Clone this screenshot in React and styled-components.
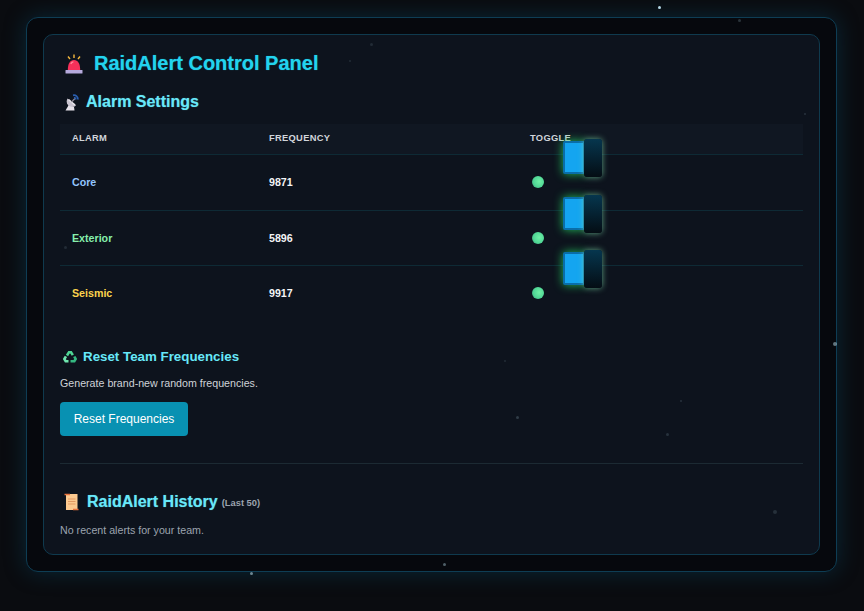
import React from "react";
import styled, { createGlobalStyle } from "styled-components";

const Global = createGlobalStyle`
  html, body { margin: 0; padding: 0; height: 100%; background: #0a0c10; }
  body { font-family: "Liberation Sans", Arial, sans-serif; overflow: hidden; }
  #root { height: 100%; }
`;

const Page = styled.div`
  position: relative;
  width: 864px;
  height: 611px;
  box-sizing: border-box;
  padding: 17px 27px 39px 26px;
  overflow: hidden;
  background: #0a0c10;
`;

const Star = styled.span`
  position: absolute;
  z-index: 3;
  left: ${(p) => p.$x}px;
  top: ${(p) => p.$y}px;
  width: ${(p) => p.$s}px;
  height: ${(p) => p.$s}px;
  border-radius: 50%;
  background: rgba(190, 225, 240, ${(p) => p.$a});
`;

const Outer = styled.div`
  position: relative;
  z-index: 1;
  height: 100%;
  box-sizing: border-box;
  padding: 16px;
  background: #06080d;
  border: 1.5px solid #0e3d54;
  border-radius: 12px;
  box-shadow: 0 0 22px rgba(10, 90, 125, 0.36);
`;

const Panel = styled.main`
  height: 100%;
  box-sizing: border-box;
  padding: 17px 16px 0;
  background: #0d131d;
  border: 1px solid #0f3a4e;
  border-radius: 10px;
`;

const Title = styled.h1`
  display: flex;
  align-items: center;
  gap: 11px;
  margin: 0 0 18px 5px;
  height: 23px;
  font-size: 20px;
  line-height: 23px;
  font-weight: 700;
  color: #22d3ee;
  text-shadow: 0 0 1px rgba(34, 211, 238, 0.55);
`;

const SectionTitle = styled.h2`
  display: flex;
  align-items: center;
  gap: 7px;
  margin: 0 0 13px 5px;
  height: 18px;
  font-size: 16px;
  line-height: 18px;
  font-weight: 700;
  color: #67e8f9;
  text-shadow: 0 0 1px rgba(103, 232, 249, 0.55);
`;

const Icon = styled.svg`
  display: block;
  flex: none;
`;

const Table = styled.table`
  width: 743px;
  table-layout: fixed;
  border-collapse: collapse;
`;

const HeadCell = styled.th`
  height: 28px;
  padding: 0 12px 2px;
  text-align: left;
  font-size: 9.33px;
  font-weight: 700;
  letter-spacing: 0.3px;
  color: #d1d5db;
  background: #101722;
  border-bottom: 1px solid #0e2a35;
`;

const Cell = styled.td`
  height: 54.5px;
  padding: 0 12px;
  font-size: 10.66px;
  font-weight: 700;
  color: ${(p) => p.$color || "#f3f4f6"};
  border-bottom: ${(p) => (p.$last ? "none" : "1px solid #0e2a35")};
`;

const ToggleWrap = styled.div`
  position: relative;
  height: 12px;
  display: flex;
  align-items: center;
`;

const Dot = styled.span`
  display: block;
  width: 12px;
  height: 12px;
  margin-left: 2px;
  border-radius: 50%;
  background: radial-gradient(circle at 60% 45%, #6ff0a6 0, #4fd695 58%, #37886f 100%);
`;

const Track = styled.span`
  position: absolute;
  left: 33px;
  top: -35px;
  width: 22px;
  height: 33px;
  box-sizing: border-box;
  background: #14a5f0;
  border: 2px solid #0a6da8;
  border-radius: 2px;
  box-shadow: 0 0 10px rgba(34, 197, 94, 0.95);
`;

const Knob = styled.span`
  position: absolute;
  left: 54px;
  top: -37px;
  width: 18px;
  height: 38px;
  border-radius: 3px;
  background: linear-gradient(180deg, #06364e, #040d14);
  box-shadow: 0 0 6px rgba(130, 225, 175, 0.7);
`;

const Reset = styled.section`
  margin-top: 28px;
`;

const SubTitle = styled.h3`
  display: flex;
  align-items: center;
  gap: 6px;
  margin: 0 0 12px 3px;
  height: 16px;
  font-size: 13.33px;
  line-height: 16px;
  font-weight: 700;
  color: #67e8f9;
`;

const Text = styled.p`
  margin: 0 0 13px;
  font-size: 10.66px;
  line-height: 12px;
  color: #cfd2d8;
`;

const Button = styled.button`
  display: block;
  width: 128px;
  height: 34px;
  padding: 0;
  border: 0;
  border-radius: 4px;
  background: #0891b2;
  color: #fff;
  font-family: inherit;
  font-size: 12px;
`;

const Divider = styled.hr`
  margin: 27px 0 29px;
  height: 1px;
  border: 0;
  background: #1c2a33;
`;

const HistoryTitle = styled(SectionTitle)`
  gap: 8px;
  margin: 0 0 13px 4px;
`;

const Small = styled.small`
  align-self: flex-end;
  margin-left: -4px;
  font-size: 9.33px;
  line-height: 16px;
  font-weight: 700;
  color: #9ca3af;
  text-shadow: none;
`;

const Muted = styled(Text)`
  margin: 0;
  color: #9ca3af;
`;

const stars = [
  [658, 6, 3, 0.95], [738, 19, 3, 0.2], [370, 43, 3, 0.12], [349, 60, 2, 0.12],
  [804, 113, 2, 0.15], [64, 246, 3, 0.12], [833, 342, 4, 0.5], [504, 360, 2, 0.12],
  [516, 416, 3, 0.2], [680, 400, 2, 0.15], [666, 433, 3, 0.15], [773, 510, 4, 0.14],
  [250, 572, 3, 0.55], [443, 563, 3, 0.4],
];

const rows = [
  ["Core", "#93c5fd", 9871],
  ["Exterior", "#86efac", 5896],
  ["Seismic", "#fcd34d", 9917],
];

const AlarmIcon = () => (
  <Icon width="18" height="20" viewBox="0 0 18 20">
    <path d="M9 0.500v3.500M3 2.500l2 2.500M15 2.500l-2 2.500" stroke="#f5b83d" strokeWidth="1.400" fill="none" />
    <path d="M2.800 16.500c0-7 2.200-10.500 6.200-10.500s6.200 3.500 6.200 10.500z" fill="#f6305a" />
    <path d="M5.800 10c.6-1.300 1.500-2 2.600-2.200" stroke="#ff8a9c" strokeWidth="1.300" fill="none" />
    <rect x="0.500" y="16" width="17" height="3.500" rx="0.500" fill="#b5a9dc" />
  </Icon>
);

const DishIcon = () => (
  <Icon width="14" height="17" viewBox="0 0 14 17">
    <path d="M0.500 16.500L4 10.500l5 2.500 .5 3.500z" fill="#e6e2ea" />
    <path d="M2.500 4.500c-1.800 3.200-.5 6.800 2.800 8 2.500 .9 4.600 .2 5.700-1.200z" fill="#c9c4d0" />
    <path d="M3.500 5.500l6.500 5.500" stroke="#e9e6ec" strokeWidth="1.600" />
    <path d="M6.500 8l3.500-3.500" stroke="#8e8a96" strokeWidth="1.200" />
    <path d="M8 1.300c2.700-.6 5 1.200 5 4.200M9 3.800c1.200-.2 1.700 .4 1.700 1.600" stroke="#2a5fb0" strokeWidth="1.700" fill="none" />
  </Icon>
);

const RecycleIcon = () => (
  <Icon width="14" height="13" viewBox="0 0 14 13" fill="none" strokeWidth="2.600">
    <path d="M4 5.500L6 2.200h2L9.800 5.200" stroke="#4fd695" />
    <path d="M11.300 6.500l1.300 2.500-1.300 2.300H7.500" stroke="#35b981" />
    <path d="M5.500 11.300H2.700L1.400 9l1.500-2.600" stroke="#6fe6ae" />
  </Icon>
);

const ScrollIcon = () => (
  <Icon width="15" height="18" viewBox="0 0 15 18">
    <rect x="2" y="1" width="11.500" height="16" fill="#fdca90" />
    <path d="M0.500 1.500h5.500M9 16.500h5.500" stroke="#e8733f" strokeWidth="1.600" />
    <path d="M4 6h7.500M4 8.500h7.500M4 11h7.500" stroke="#e39a63" strokeWidth="1.100" />
  </Icon>
);

export default function App() {
  return (
    <Page>
      <Global />
      {stars.map(([x, y, s, a]) => (
        <Star key={`${x}-${y}`} $x={x} $y={y} $s={s} $a={a} />
      ))}
      <Outer>
        <Panel>
          <Title>
            <AlarmIcon />
            RaidAlert Control Panel
          </Title>
          <SectionTitle>
            <DishIcon />
            Alarm Settings
          </SectionTitle>
          <Table>
            <colgroup>
              <col style={{ width: 197 }} />
              <col style={{ width: 261 }} />
              <col />
            </colgroup>
            <thead>
              <tr>
                <HeadCell>ALARM</HeadCell>
                <HeadCell>FREQUENCY</HeadCell>
                <HeadCell>TOGGLE</HeadCell>
              </tr>
            </thead>
            <tbody>
              {rows.map(([name, color, freq], i) => (
                <tr key={name}>
                  <Cell $color={color} $last={i === 2}>{name}</Cell>
                  <Cell $last={i === 2}>{freq}</Cell>
                  <Cell $last={i === 2}>
                    <ToggleWrap>
                      <Dot />
                      <Track />
                      <Knob />
                    </ToggleWrap>
                  </Cell>
                </tr>
              ))}
            </tbody>
          </Table>
          <Reset>
            <SubTitle>
              <RecycleIcon />
              Reset Team Frequencies
            </SubTitle>
            <Text>Generate brand-new random frequencies.</Text>
            <Button>Reset Frequencies</Button>
          </Reset>
          <Divider />
          <HistoryTitle>
            <ScrollIcon />
            RaidAlert History
            <Small>(Last 50)</Small>
          </HistoryTitle>
          <Muted>No recent alerts for your team.</Muted>
        </Panel>
      </Outer>
    </Page>
  );
}
